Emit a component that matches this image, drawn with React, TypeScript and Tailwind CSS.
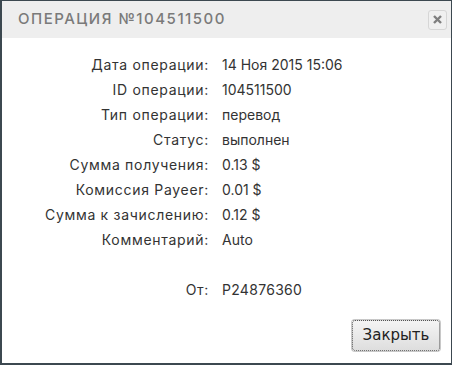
import React from "react";

const rows: [string, string][] = [
  ["Дата операции:", "14 Ноя 2015 15:06"],
  ["ID операции:", "104511500"],
  ["Тип операции:", "перевод"],
  ["Статус:", "выполнен"],
  ["Сумма получения:", "0.13 $"],
  ["Комиссия Payeer:", "0.01 $"],
  ["Сумма к зачислению:", "0.12 $"],
  ["Комментарий:", "Auto"],
];

export default function App() {
  return (
    <div className="w-[452px] h-[365px] bg-white border-l-2 border-t border-r border-b-2 border-[#3c4850] flex flex-col" style={{ fontFamily: "Inter, 'DejaVu Sans', sans-serif" }}>
      <div className="h-[37px] bg-[#eeeeee] flex items-center justify-between pl-[16px] pr-[4px] shrink-0">
        <span className="text-[15px] tracking-[1.5px] text-[#7a7a7a] font-medium">ОПЕРАЦИЯ №104511500</span>
        <div className="w-[19px] h-[20px] border border-[#d6d6d6] rounded-[3px] bg-[#f0f0f0] flex items-center justify-center">
          <svg width="9" height="9" viewBox="0 0 9 9">
            <path d="M1 1L8 8M8 1L1 8" stroke="#7f7f7f" strokeWidth="2.4" strokeLinecap="butt" />
          </svg>
        </div>
      </div>
      <div className="flex-1 flex flex-col pt-[14px] text-[14px] text-[#333]">
        {rows.map(([l, v]) => (
          <div key={l} className="flex h-[25px] items-center">
            <div className="w-[207px] text-right tracking-[0.7px]">{l}</div>
            <div className="pl-[13px]">{v}</div>
          </div>
        ))}
        <div className="h-[25px]" />
        <div className="flex h-[25px] items-center">
          <div className="w-[207px] text-right tracking-[0.7px]">От:</div>
          <div className="pl-[13px] tracking-[0.3px]">P24876360</div>
        </div>
        <div className="flex justify-end pr-[11px] mt-[18px]">
          <button className="w-[88px] h-[31px] rounded-[3px] border border-dotted border-[#555] bg-gradient-to-b from-[#f4f4f4] to-[#dedede] text-[15px] text-[#222] shadow-[0_0_0_1px_#c8c8c8]" style={{ fontFamily: "'DejaVu Sans', sans-serif" }}>
            Закрыть
          </button>
        </div>
      </div>
    </div>
  );
}
